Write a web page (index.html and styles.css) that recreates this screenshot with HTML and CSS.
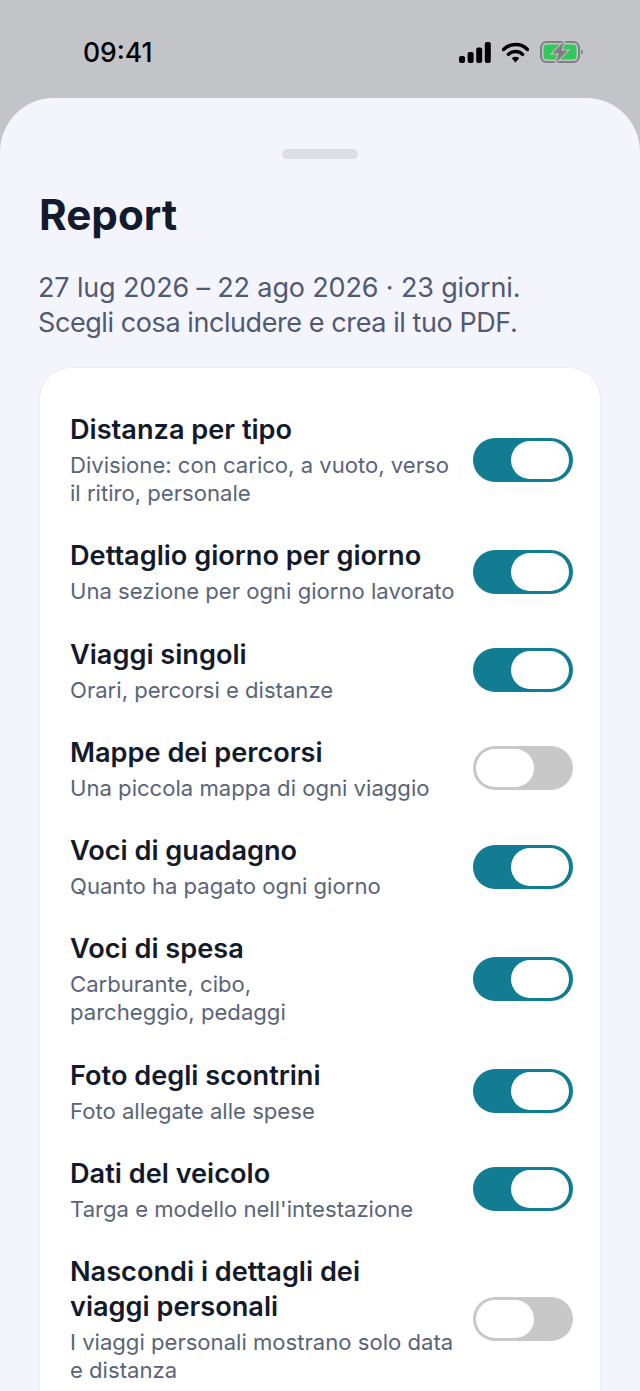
FILE: index.html
```html
<!DOCTYPE html>
<html lang="it">
<head>
    <meta charset="utf-8">
    <title>Report</title>
    <link rel="stylesheet" href="styles.css">
</head>
<body>
<div class="status">
    <span class="time">09:41</span>
    <div class="status-icons">
        <svg width="32" height="21" viewBox="0 0 32 21">
            <rect x="0" y="14" width="6" height="7" rx="2"/>
            <rect x="8.6" y="10" width="6" height="11" rx="2"/>
            <rect x="17.2" y="5.5" width="6" height="15.5" rx="2"/>
            <rect x="25.8" y="0" width="6" height="21" rx="2"/>
        </svg>
        <svg width="27" height="21" viewBox="0 0 27 21">
            <path d="M1.5 7.5a17 17 0 0 1 24 0" fill="none" stroke="#000" stroke-width="3.4" stroke-linecap="round"/>
            <path d="M6.4 12.4a10 10 0 0 1 14.2 0" fill="none" stroke="#000" stroke-width="3.4" stroke-linecap="round"/>
            <path d="M9.8 16.2a5.4 5.4 0 0 1 7.4 0L13.5 20.5z"/>
        </svg>
        <svg width="44" height="22" viewBox="0 0 44 22">
            <rect x="1" y="1" width="38" height="20" rx="5.5" fill="none" stroke="#808184" stroke-width="2"/>
            <rect x="3.500" y="3.500" width="33" height="15" rx="3.500" fill="#34c759"/>
            <path d="M41 8.500c1.200.3 2 1.300 2 2.500s-.8 2.200-2 2.500z" fill="#808184"/>
            <path d="M24.500 0 12 12.500h6.500L15.500 22l12.500-12.500h-6.500z" fill="#808184" stroke="#c3c4c8" stroke-width="2" paint-order="stroke"/>
        </svg>
    </div>
</div>
<div class="sheet">
    <div class="handle"></div>
    <h1>Report</h1>
    <p class="intro"><span class="line-a">27 lug 2026 – 22 ago 2026 · 23 giorni.</span><br><span class="line-b">Scegli cosa includere e crea il tuo PDF.</span></p>
    <div class="card">
        <div class="row">
            <div class="label">
                <div class="name">Distanza per tipo</div>
                <div class="desc">Divisione: con carico, a vuoto, verso<br>il ritiro, personale</div>
            </div>
            <div class="toggle on"><i></i></div>
        </div>
        <div class="row">
            <div class="label">
                <div class="name">Dettaglio giorno per giorno</div>
                <div class="desc">Una sezione per ogni giorno lavorato</div>
            </div>
            <div class="toggle on"><i></i></div>
        </div>
        <div class="row">
            <div class="label">
                <div class="name">Viaggi singoli</div>
                <div class="desc">Orari, percorsi e distanze</div>
            </div>
            <div class="toggle on"><i></i></div>
        </div>
        <div class="row">
            <div class="label">
                <div class="name">Mappe dei percorsi</div>
                <div class="desc">Una piccola mappa di ogni viaggio</div>
            </div>
            <div class="toggle"><i></i></div>
        </div>
        <div class="row">
            <div class="label">
                <div class="name">Voci di guadagno</div>
                <div class="desc">Quanto ha pagato ogni giorno</div>
            </div>
            <div class="toggle on"><i></i></div>
        </div>
        <div class="row">
            <div class="label">
                <div class="name">Voci di spesa</div>
                <div class="desc">Carburante, cibo,<br>parcheggio, pedaggi</div>
            </div>
            <div class="toggle on"><i></i></div>
        </div>
        <div class="row">
            <div class="label">
                <div class="name">Foto degli scontrini</div>
                <div class="desc">Foto allegate alle spese</div>
            </div>
            <div class="toggle on"><i></i></div>
        </div>
        <div class="row">
            <div class="label">
                <div class="name">Dati del veicolo</div>
                <div class="desc">Targa e modello nell'intestazione</div>
            </div>
            <div class="toggle on"><i></i></div>
        </div>
        <div class="row">
            <div class="label">
                <div class="name">Nascondi i dettagli dei<br>viaggi personali</div>
                <div class="desc">I viaggi personali mostrano solo data<br>e distanza</div>
            </div>
            <div class="toggle"><i></i></div>
        </div>
    </div>
</div>
</body>
</html>
```

FILE: styles.css
```css
html, body{
    margin: 0;
    padding: 0;
}
body{
    height: 1391px;
    overflow: hidden;
    background: #C3C4C8;
    font-family: Inter, "Noto Sans", sans-serif;
}
.status{
    height: 98px;
    box-sizing: border-box;
    padding: 6px 56px 0 83px;
    display: flex;
    align-items: center;
    justify-content: space-between;
}
.time{
    font-size: 26.5px;
    font-weight: 500;
    color: #000;
}
.status-icons{
    display: flex;
    align-items: center;
    gap: 11px;
}
.sheet{
    height: 1293px;
    box-sizing: border-box;
    padding: 51px 39px 0;
    overflow: hidden;
    background: #F3F4FC;
    border-radius: 54px 54px 0 0;
}
.handle{
    width: 76px;
    height: 10px;
    margin: 0 auto;
    border-radius: 5px;
    background: #DCDEE3;
}
h1{
    margin: 31px 0 0;
    font-size: 42.2px;
    line-height: 50px;
    font-weight: 700;
    color: #131A2B;
}
.intro{
    margin: 30px 0 0 -1px;
    font-size: 27px;
    line-height: 35px;
    color: #515A70;
}
.line-a{
    letter-spacing: -0.15px;
}
.line-b{
    letter-spacing: -0.42px;
}
.card{
    margin-top: 27px;
    padding: 44px 27px 40px 30px;
    display: flex;
    flex-direction: column;
    gap: 31.25px;
    background: #fff;
    border: 1px solid #EBEDF3;
    border-radius: 32px 32px 0 0;
}
.row{
    display: flex;
    align-items: center;
    justify-content: space-between;
}
.name{
    font-size: 27.15px;
    line-height: 35px;
    font-weight: 600;
    color: #131A2B;
}
.desc{
    margin-top: 4px;
    font-size: 22.1px;
    line-height: 28px;
    color: #5A6478;
}
.toggle{
    width: 100px;
    height: 44px;
    flex: none;
    box-sizing: border-box;
    padding: 3px;
    display: flex;
    border-radius: 22px;
    background: #C8C8C8;
}
.toggle i{
    width: 58px;
    height: 38px;
    border-radius: 19px;
    background: #fff;
}
.toggle.on{
    justify-content: flex-end;
    padding-right: 4px;
    background: #127D92;
}
```
